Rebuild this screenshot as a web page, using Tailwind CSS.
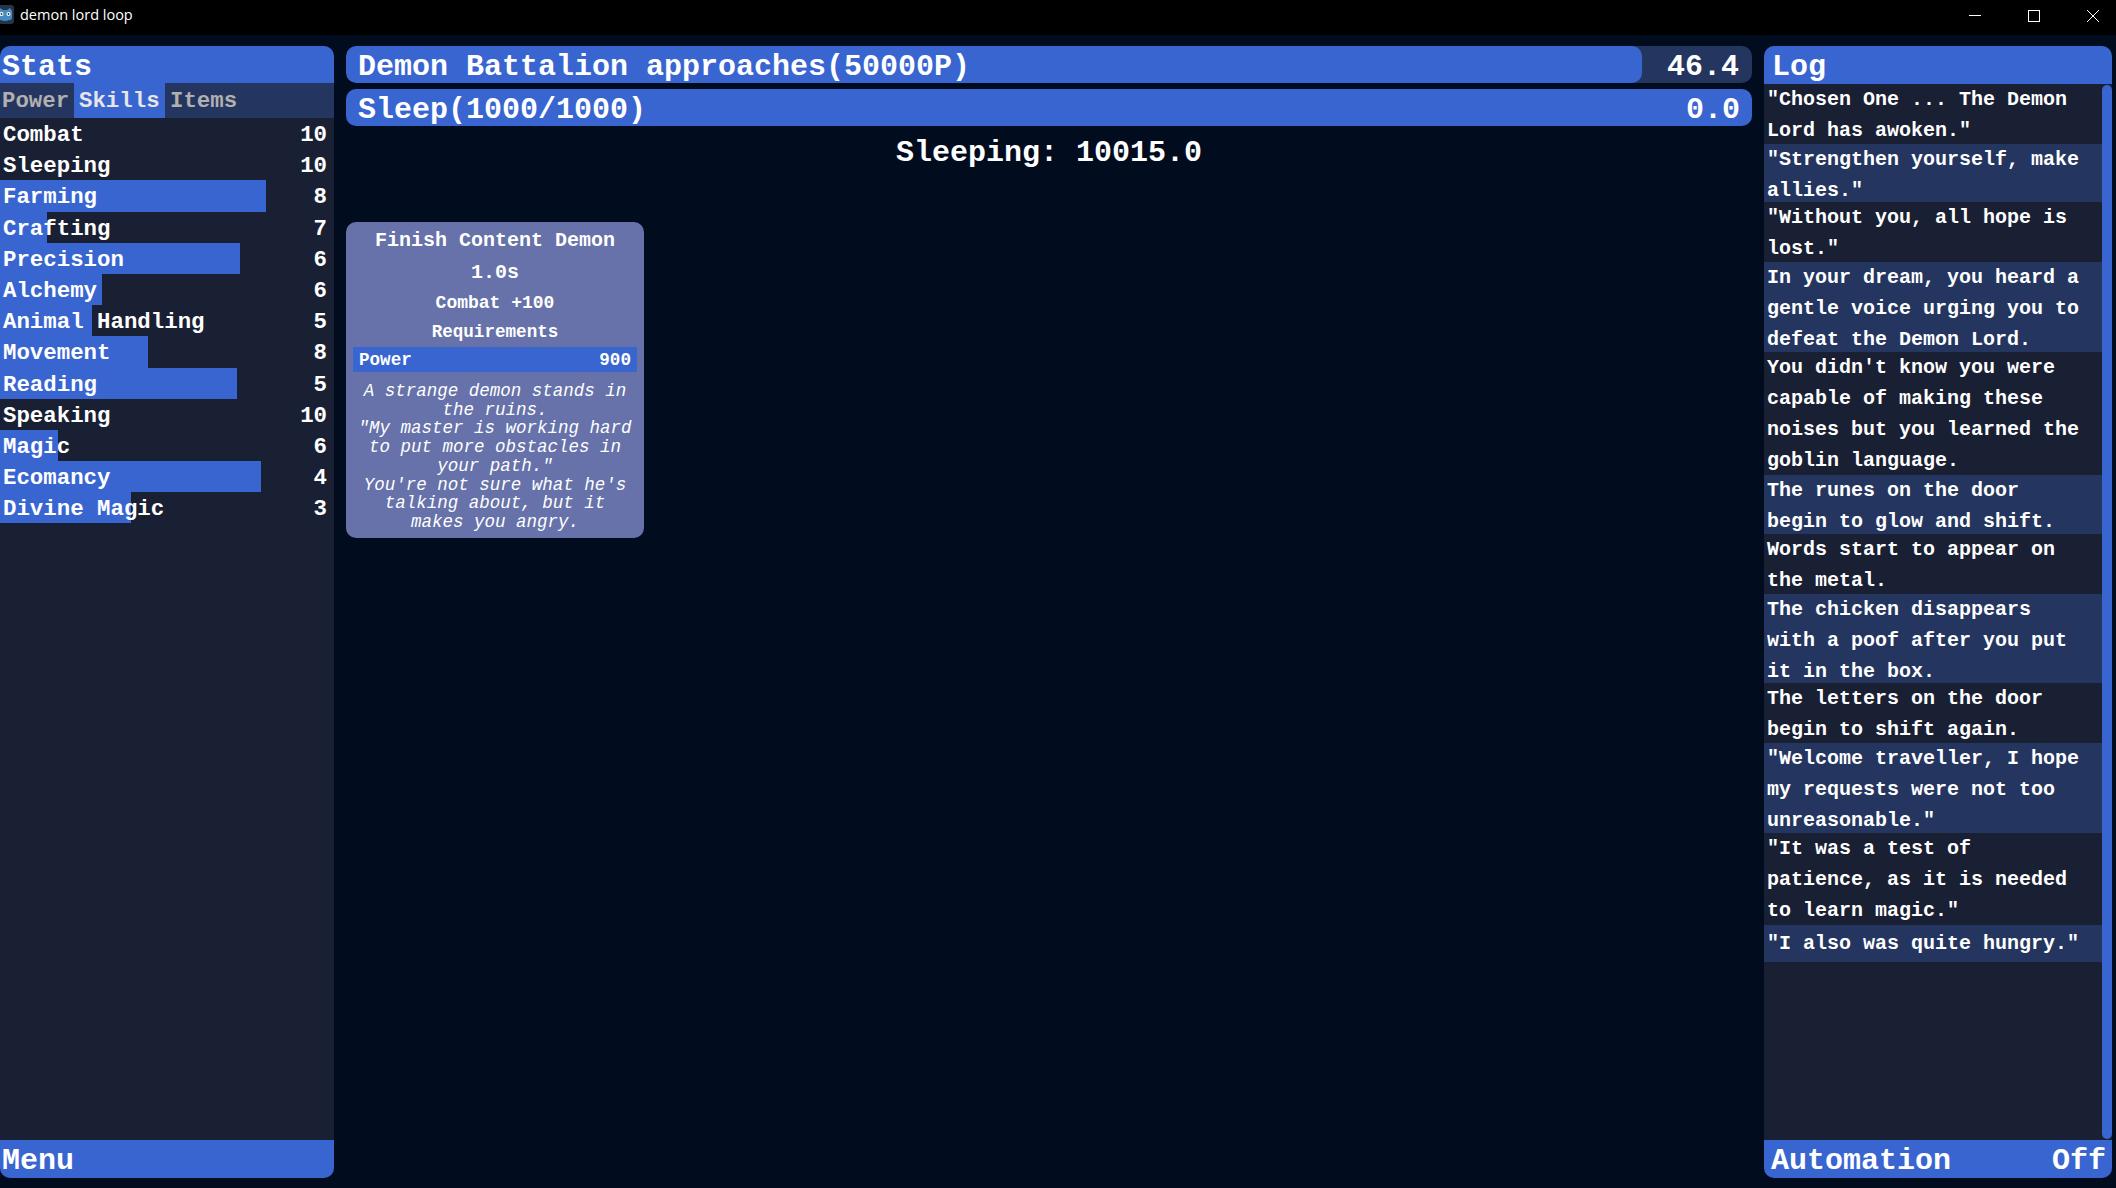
<!doctype html>
<html>
<head>
<meta charset="utf-8">
<script src="https://cdn.jsdelivr.net/npm/@tailwindcss/browser@4"></script>
</head>
<body class="m-0 h-[1188px] w-[2116px] overflow-hidden bg-[#020c1f] text-white font-['Liberation_Mono',monospace] font-bold">
<header class="flex h-[35px] items-start justify-between bg-black font-['Open_Sans',sans-serif] font-normal">
  <div class="flex items-center gap-[5px] pt-[5px] text-[14.5px] leading-[20px]">
    <svg class="h-[20px] w-[15px]" viewBox="0 0 15 20"><rect x="-6" y="0" width="20" height="19" rx="3" fill="#27334a"/><path d="M-2 6 L0 3 L3 5 L7 5 L10 3 L12 6 L12 13 Q11 16 9 15 Q5 17 1 15 Q-1 16 -2 13 Z" fill="#478cbf"/><circle cx="1.5" cy="9" r="2" fill="#fff"/><circle cx="8.5" cy="9" r="2" fill="#fff"/><circle cx="1.5" cy="9" r=".9" fill="#27334a"/><circle cx="8.5" cy="9" r=".9" fill="#27334a"/></svg>
    <span>demon lord loop</span>
  </div>
  <div class="flex items-center gap-[47px] pr-[17px] pt-[10px]">
    <svg class="h-3 w-3" viewBox="0 0 12 12"><path d="M0 5.5 H12" stroke="#fff"/></svg>
    <svg class="h-3 w-3" viewBox="0 0 12 12"><rect x=".5" y=".5" width="11" height="11" fill="none" stroke="#fff"/></svg>
    <svg class="h-3 w-3" viewBox="0 0 12 12"><path d="M0 0 L12 12 M12 0 L0 12" stroke="#fff"/></svg>
  </div>
</header>

<main class="flex h-[1153px] pt-[11px] pb-[10px]">
  <aside class="flex w-[334px] flex-col rounded-[10px] bg-[#1a2033]">
    <div class="h-[37px] shrink-0 rounded-t-[10px] bg-[#3865d0] pl-[2px] text-[30px] leading-[42px]">Stats</div>
    <div class="flex h-[35px] shrink-0 bg-[#24365f] text-[22.4px] leading-[37px] text-[#b0b0b0]">
      <div class="w-[74px] pl-[2px]">Power</div>
      <div class="w-[91px] bg-[#3865d0] pl-[5px] text-[#e6e6e6]">Skills</div>
      <div class="pl-[5px]">Items</div>
    </div>
    <div class="flex flex-1 flex-col text-[22.4px] leading-[34px]">
      <div class="relative flex h-[31.2px] justify-between pl-[3px] pr-[7px]"><span>Combat</span><span>10</span></div>
      <div class="relative flex h-[31.2px] justify-between pl-[3px] pr-[7px]"><span>Sleeping</span><span>10</span></div>
      <div class="relative flex h-[31.2px] justify-between pl-[3px] pr-[7px]"><div class="absolute inset-y-0 left-0 w-[266px] bg-[#3865d0]"></div><span class="relative">Farming</span><span>8</span></div>
      <div class="relative flex h-[31.2px] justify-between pl-[3px] pr-[7px]"><div class="absolute inset-y-0 left-0 w-[47px] bg-[#3865d0]"></div><span class="relative">Crafting</span><span>7</span></div>
      <div class="relative flex h-[31.2px] justify-between pl-[3px] pr-[7px]"><div class="absolute inset-y-0 left-0 w-[240px] bg-[#3865d0]"></div><span class="relative">Precision</span><span>6</span></div>
      <div class="relative flex h-[31.2px] justify-between pl-[3px] pr-[7px]"><div class="absolute inset-y-0 left-0 w-[102px] bg-[#3865d0]"></div><span class="relative">Alchemy</span><span>6</span></div>
      <div class="relative flex h-[31.2px] justify-between pl-[3px] pr-[7px]"><div class="absolute inset-y-0 left-0 w-[92px] bg-[#3865d0]"></div><span class="relative">Animal Handling</span><span>5</span></div>
      <div class="relative flex h-[31.2px] justify-between pl-[3px] pr-[7px]"><div class="absolute inset-y-0 left-0 w-[148px] bg-[#3865d0]"></div><span class="relative">Movement</span><span>8</span></div>
      <div class="relative flex h-[31.2px] justify-between pl-[3px] pr-[7px]"><div class="absolute inset-y-0 left-0 w-[237px] bg-[#3865d0]"></div><span class="relative">Reading</span><span>5</span></div>
      <div class="relative flex h-[31.2px] justify-between pl-[3px] pr-[7px]"><span>Speaking</span><span>10</span></div>
      <div class="relative flex h-[31.2px] justify-between pl-[3px] pr-[7px]"><div class="absolute inset-y-0 left-0 w-[58px] bg-[#3865d0]"></div><span class="relative">Magic</span><span>6</span></div>
      <div class="relative flex h-[31.2px] justify-between pl-[3px] pr-[7px]"><div class="absolute inset-y-0 left-0 w-[261px] bg-[#3865d0]"></div><span class="relative">Ecomancy</span><span>4</span></div>
      <div class="relative flex h-[31.2px] justify-between pl-[3px] pr-[7px]"><div class="absolute inset-y-0 left-0 w-[131px] bg-[#3865d0]"></div><span class="relative">Divine Magic</span><span>3</span></div>
    </div>
    <div class="h-[38px] shrink-0 rounded-b-[10px] bg-[#3865d0] pl-[2px] text-[30px] leading-[42px]">Menu</div>
  </aside>

  <section class="ml-[12px] flex w-[1406px] flex-col">
    <div class="relative flex h-[37px] justify-between overflow-hidden rounded-[10px] bg-[#24365f] pl-[12px] pr-[13px] text-[30px] leading-[42px]">
      <div class="absolute inset-y-0 left-0 w-[1296px] rounded-[10px] bg-[#3865d0]"></div>
      <span class="relative">Demon Battalion approaches(50000P)</span><span class="relative">46.4</span>
    </div>
    <div class="mt-[6px] flex h-[37px] justify-between rounded-[10px] bg-[#3865d0] pl-[12px] pr-[12px] text-[30px] leading-[42px]">
      <span>Sleep(1000/1000)</span><span>0.0</span>
    </div>
    <div class="mt-[7px] h-[40px] text-center text-[30px] leading-[41px]">Sleeping: 10015.0</div>
    <div class="mt-[49px] w-[298px] rounded-[10px] bg-[#6672a9] px-[7px] pt-[4px] text-center">
      <div class="h-[33px] text-[20px] leading-[29px]">Finish Content Demon</div>
      <div class="h-[30px] text-[20px] leading-[28px]">1.0s</div>
      <div class="h-[29px] text-[18px] leading-[29px]">Combat +100</div>
      <div class="h-[29px] text-[17.6px] leading-[28px]">Requirements</div>
      <div class="flex h-[25px] justify-between bg-[#3865d0] px-[6px] text-[17.6px] leading-[26px]"><span>Power</span><span>900</span></div>
      <p class="px-[4px] pt-[10px] pb-[6px] text-[17.5px] font-normal italic leading-[18.7px]">A strange demon stands in the ruins.<br>"My master is working hard to put more obstacles in your path."<br>You're not sure what he's talking about, but it makes you angry.</p>
    </div>
  </section>

  <aside class="ml-[12px] flex w-[348px] flex-col rounded-[10px] bg-[#1a2033]">
    <div class="h-[38px] shrink-0 rounded-t-[10px] bg-[#3865d0] pl-[8px] text-[30px] leading-[42px]">Log</div>
    <div class="flex min-h-0 flex-1">
      <div class="flex-1 text-[20px] leading-[31px]">
        <div class="h-[60px] pl-[3px] pr-[17px]">"Chosen One ... The Demon Lord has awoken."</div>
        <div class="h-[58px] bg-[#24365f] pl-[3px] pr-[17px]">"Strengthen yourself, make allies."</div>
        <div class="h-[60px] pl-[3px] pr-[17px]">"Without you, all hope is lost."</div>
        <div class="h-[90px] bg-[#24365f] pl-[3px] pr-[17px]">In your dream, you heard a gentle voice urging you to defeat the Demon Lord.</div>
        <div class="h-[123px] pl-[3px] pr-[17px]">You didn't know you were capable of making these noises but you learned the goblin language.</div>
        <div class="h-[59px] bg-[#24365f] pl-[3px] pr-[17px]">The runes on the door begin to glow and shift.</div>
        <div class="h-[60px] pl-[3px] pr-[17px]">Words start to appear on the metal.</div>
        <div class="h-[89px] bg-[#24365f] pl-[3px] pr-[17px]">The chicken disappears with a poof after you put it in the box.</div>
        <div class="h-[60px] pl-[3px] pr-[17px]">The letters on the door begin to shift again.</div>
        <div class="h-[90px] bg-[#24365f] pl-[3px] pr-[17px]">"Welcome traveller, I hope my requests were not too unreasonable."</div>
        <div class="h-[92px] pl-[3px] pr-[17px]">"It was a test of patience, as it is needed to learn magic."</div>
        <div class="h-[37px] bg-[#24365f] pl-[3px] pr-[17px] leading-[37px]">"I also was quite hungry."</div>
      </div>
      <div class="my-[1px] w-[10px] rounded-[5px] bg-[#3865d0]"></div>
    </div>
    <div class="flex h-[38px] shrink-0 justify-between rounded-b-[10px] bg-[#3865d0] pl-[7px] pr-[6px] text-[30px] leading-[42px]"><span>Automation</span><span>Off</span></div>
  </aside>
</main>
</body>
</html>
